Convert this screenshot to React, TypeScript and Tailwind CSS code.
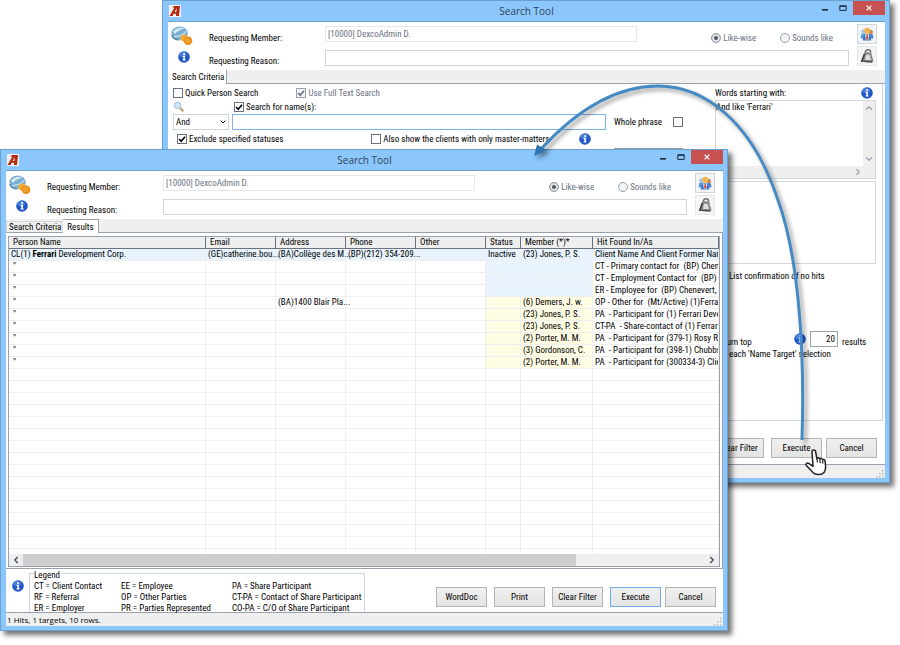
import { useId, type ReactNode } from 'react';
import { ChevronDown, ChevronLeft, ChevronRight, ChevronUp } from 'lucide-react';

const hits = [
    { address: '(BA)Collège des M...', status: 'Inactive', member: '(23) Jones, P. S.', hit: 'Client Name And Client Former Name', tone: 'blue' },
    { address: '', status: '', member: '', hit: 'CT - Primary contact for  (BP) Chenevert, D.', tone: 'blue' },
    { address: '', status: '', member: '', hit: 'CT - Employment Contact for  (BP) Chenevert, D.', tone: 'blue' },
    { address: '', status: '', member: '', hit: 'ER - Employee for  (BP) Chenevert, D.', tone: 'blue' },
    { address: '(BA)1400 Blair Pla...', status: '', member: '(6) Demers, J. w.', hit: 'OP - Other for  (Mt/Active) (1)Ferrari Development', tone: 'yellow' },
    { address: '', status: '', member: '(23) Jones, P. S.', hit: 'PA  - Participant for (1) Ferrari Development', tone: 'yellow' },
    { address: '', status: '', member: '(23) Jones, P. S.', hit: 'CT-PA  - Share-contact of (1) Ferrari Development', tone: 'yellow' },
    { address: '', status: '', member: '(2) Porter, M. M.', hit: 'PA  - Participant for (379-1) Rosy Rose', tone: 'yellow' },
    { address: '', status: '', member: '(3) Gordonson, C.', hit: 'PA  - Participant for (398-1) Chubbs Inc.', tone: 'yellow' },
    { address: '', status: '', member: '(2) Porter, M. M.', hit: 'PA  - Participant for (300334-3) Client', tone: 'yellow' },
];

const columns = ['Person Name', 'Email', 'Address', 'Phone', 'Other', 'Status', 'Member (*)*', 'Hit Found In/As'];

const legend = [
    ['CT = Client Contact', 'RF = Referral', 'ER = Employer'],
    ['EE = Employee', 'OP = Other Parties', 'PR = Parties Represented'],
    ['PA = Share Participant', 'CT-PA = Contact of Share Participant', 'CO-PA = C/O of Share Participant'],
];

function InfoIcon() {
    return (
        <svg viewBox="0 0 12 12" className="size-3 shrink-0" aria-hidden="true">
            <circle cx="6" cy="6" r="5.8" fill="#1f56c8" />
            <ellipse cx="5" cy="3.6" rx="3.8" ry="2.6" fill="#5c8fe6" opacity="0.7" />
            <circle cx="6.1" cy="2.9" r="1" fill="#fff" />
            <path d="M4.6 4.8h2.3v3.8h.8v.9H4.5v-.9h.8V5.7h-.7z" fill="#fff" />
        </svg>
    );
}

function AppIcon() {
    return (
        <svg viewBox="0 0 12 12" className="size-3" aria-hidden="true">
            <rect width="12" height="12" fill="#f3f1f1" />
            <path
                d="M.5 11 5.4 2.6 3.6 3 4.8 1H11L10 11H6.9l.2-2.2H4.7L3.6 11zM5.6 6.9h1.7l.5-3.8z"
                fill="#b5290f"
                fillRule="evenodd"
            />
        </svg>
    );
}

function GlobeCoins() {
    return (
        <svg viewBox="0 0 22 20" className="w-[22px] h-5" aria-hidden="true">
            <ellipse cx="8.6" cy="7.2" rx="8.2" ry="6.6" fill="#7aaed2" />
            <path d="M2 5.5C5 1.8 10 .8 13.5 2.4 10 3 5.8 5 4 8z" fill="#d5ebf6" />
            <path d="M3 10.5c4 .4 9-1.5 12.6-5.6" stroke="#c3e0ef" strokeWidth="1.4" fill="none" />
            <path d="M.8 9c1 3 4 5 7.6 5" stroke="#417ea9" strokeWidth="1.2" fill="none" />
            <circle cx="13" cy="12" r="3.6" fill="#f5ab35" />
            <circle cx="17" cy="14.8" r="4.3" fill="#e88d17" />
            <circle cx="16.6" cy="14.4" r="2.6" fill="#f0a132" />
        </svg>
    );
}

function PeopleIcon() {
    return (
        <svg viewBox="0 0 14 14" className="size-3.5" aria-hidden="true">
            <path d="M.6 11.5C.6 8 1.5 6 3.3 6c2.2 0 3 2 3 5.5z" fill="#5b9bdc" />
            <circle cx="3.5" cy="4.6" r="2.4" fill="#a3c6e6" />
            <path d="M8 11.5C8 8 9 6.5 10.8 6.5s2.6 1.8 2.6 5z" fill="#4f86cc" />
            <circle cx="10.8" cy="5" r="2.2" fill="#c58c58" />
            <path d="M2.8 13.4c0-4.4 1.6-6.4 4.2-6.4s4.2 2 4.2 6.4z" fill="#3b78c8" />
            <path d="M5 7.4h4.2l-.8 5.6H6z" fill="#dfeaf6" />
            <circle cx="7.2" cy="3.8" r="3" fill="#f0b54a" />
            <path d="M6.700 7.400h1l.5 4.400-1 1.200-1-1.200z" fill="#d23a2a" />
        </svg>
    );
}

function WeightIcon() {
    return (
        <svg viewBox="0 0 14 14" className="size-4" aria-hidden="true">
            <path d="M5.6 4.2C5 1.2 10 .2 10.2 3.6" fill="none" stroke="#6a6a6a" strokeWidth="1.3" />
            <path d="M5 3.8h5.6l.8 1.4-.5.8 1.8 5-.9 1.6H7.5l-5.5-.6z" fill="#8c8c8c" />
            <path d="M6 5.8h3.2l1.2 4.6H5.4z" fill="#dedede" />
            <path d="M2.2 12 4.9 5" stroke="#3a3a3a" strokeWidth="1.4" />
            <path d="M2.6 11.5 11.6 12.2" stroke="#4a4a4a" strokeWidth="1" />
        </svg>
    );
}

function Check({ label, checked, disabled }: { label: string; checked?: boolean; disabled?: boolean }) {
    const id = useId();
    return (
        <span className={`flex items-center gap-0.5 ${disabled ? 'text-gray-500' : ''}`}>
            <span className="relative flex size-2.5">
                <input
                    id={id}
                    type="checkbox"
                    defaultChecked={checked}
                    disabled={disabled}
                    className="peer size-2.5 appearance-none border border-gray-500 bg-white disabled:border-gray-400 disabled:bg-gray-100"
                />
                <svg viewBox="0 0 10 10" className="pointer-events-none absolute inset-0 hidden peer-checked:block" aria-hidden="true">
                    <path d="M2.2 5 4.2 7.2 8 2.8" fill="none" stroke="currentColor" strokeWidth="1.7" />
                </svg>
            </span>
            <label htmlFor={id}>{label}</label>
        </span>
    );
}

function Radio({ label, name, checked }: { label: string; name: string; checked?: boolean }) {
    const id = useId();
    return (
        <span className="flex items-center gap-0.5 text-gray-500">
            <input
                id={id}
                type="radio"
                name={name}
                defaultChecked={checked}
                disabled
                className="size-2.5 appearance-none rounded-full border border-gray-400 bg-gray-100 checked:bg-gray-600 checked:shadow-[inset_0_0_0_2px_#e5e5e5]"
            />
            <label htmlFor={id}>{label}</label>
        </span>
    );
}

function PushButton({ children, active }: { children: ReactNode; active?: boolean }) {
    return (
        <button
            type="button"
            className={`h-5 w-[51px] shrink-0 border bg-linear-to-b from-[#f0f0f0] to-[#e4e4e4] ${active ? 'border-[#6fadf0]' : 'border-[#b4b4b4]'}`}
        >
            {children}
        </button>
    );
}

function Header() {
    const id = useId();
    return (
        <div className="flex h-12 shrink-0 bg-white pt-0.5 pr-2">
            <div className="flex w-[41px] shrink-0 flex-col items-start gap-1 pt-0.5 pl-[3px]">
                <GlobeCoins />
                <div className="pt-px pl-[7px]">
                    <InfoIcon />
                </div>
            </div>
            <div className="flex w-[116px] shrink-0 flex-col gap-[11px] pt-2">
                <label htmlFor={`${id}-member`}>Requesting Member:</label>
                <label htmlFor={`${id}-reason`}>Requesting Reason:</label>
            </div>
            <div className="flex grow flex-col gap-2 pt-0.5">
                <div className="flex items-start justify-between">
                    <input
                        id={`${id}-member`}
                        disabled
                        defaultValue="[10000] DexcoAdmin D."
                        className="h-4 w-[312px] border border-gray-200 pb-px pl-0.5 text-gray-500"
                    />
                    <div className="flex gap-6 pt-1.5 pr-4">
                        <Radio label="Like-wise" name={`${id}-mode`} checked />
                        <Radio label="Sounds like" name={`${id}-mode`} />
                    </div>
                </div>
                <input id={`${id}-reason`} className="-mt-0.5 h-4 border border-gray-300 bg-white" />
            </div>
            <div className="flex shrink-0 flex-col gap-0.5 pl-2">
                <button type="button" aria-label="Clients" className="flex size-5 items-center justify-center border border-gray-300 bg-gray-100">
                    <PeopleIcon />
                </button>
                <button type="button" aria-label="Matters" className="flex size-5 items-center justify-center border border-gray-200 bg-gray-100">
                    <WeightIcon />
                </button>
            </div>
        </div>
    );
}

function Grip() {
    return (
        <svg viewBox="0 0 8 8" className="size-2" aria-hidden="true">
            <path d="M6 0h1.5v1.5H6zM6 3h1.5v1.5H6zM3 3h1.5v1.5H3zM6 6h1.5v1.5H6zM3 6h1.5v1.5H3zM0 6h1.5v1.5H0z" fill="#bdbdbd" />
        </svg>
    );
}

function Window({ className, status, children }: { className: string; status?: string; children: ReactNode }) {
    return (
        <section
            className={`absolute flex w-[728px] flex-col border border-[#6ba0cf] bg-[#8bc7fb] pr-1 pb-1 pl-[5px] shadow-[4px_4px_5px_rgba(0,0,0,0.55)] ${className}`}
        >
            <header className="flex h-5 shrink-0 items-start">
                <div className="flex h-5 w-[88px] items-center pl-px">
                    <AppIcon />
                </div>
                <h1 className="grow pt-0.5 text-center font-['Open_Sans','Noto_Sans',sans-serif] text-[10px] leading-4 text-slate-700">Search Tool</h1>
                <div className="flex w-[88px] justify-end text-slate-800">
                    <button type="button" aria-label="Minimize" className="flex h-3.5 w-5 items-center justify-center">
                        <svg viewBox="0 0 8 8" className="size-2">
                            <path d="M1 5h6v1.6H1z" fill="currentColor" />
                        </svg>
                    </button>
                    <button type="button" aria-label="Maximize" className="flex h-3.5 w-4 items-center justify-center">
                        <svg viewBox="0 0 8 8" className="size-2">
                            <path d="M.8 1.8h6.4v4.6H.8zM.8 2.3h6.4" fill="none" stroke="currentColor" />
                        </svg>
                    </button>
                    <button type="button" aria-label="Close" className="ml-0.5 flex h-3.5 w-8 items-center justify-center bg-[#c75050] text-white">
                        <svg viewBox="0 0 8 8" className="size-2">
                            <path d="m1.6 1.6 4.8 4.8m0-4.8L1.6 6.4" stroke="currentColor" strokeWidth="1.3" />
                        </svg>
                    </button>
                </div>
            </header>
            <div className="flex min-h-0 grow flex-col border-t border-[#6ba0cf] bg-white">
                <Header />
                {children}
                <footer className="flex h-3.5 shrink-0 items-end justify-between border-t border-gray-400 bg-[#efefef] pr-px pl-px font-['Open_Sans','Noto_Sans',sans-serif] text-[8px] leading-[13px]">
                    <span>{status}</span>
                    <Grip />
                </footer>
            </div>
        </section>
    );
}

function CriteriaWindow() {
    return (
        <Window className="top-0 left-[162px] h-[483px]">
            <nav className="flex h-3.5 shrink-0 bg-[#efefef]">
                <button type="button" className="h-3.5 border-r border-gray-400 bg-white pr-0.5 pl-1">Search Criteria</button>
                <div className="grow border-b border-gray-400" />
            </nav>
            <div className="mr-0.5 flex grow border-r border-b border-gray-300 pt-0.5 pr-1.5">
                <div className="flex grow flex-col pl-[5px]">
                    <div className="flex h-3.5 items-center gap-[38px]">
                        <Check label="Quick Person Search" />
                        <Check label="Use Full Text Search" checked disabled />
                    </div>
                    <div className="flex h-3.5 items-center gap-[49px]">
                        <svg viewBox="0 0 12 12" className="size-3" aria-hidden="true">
                            <path d="m7 7 3.4 3.2" stroke="#cf9460" strokeWidth="2" />
                            <circle cx="4.6" cy="4.4" r="3.3" fill="#cfe6f8" stroke="#9cc1de" />
                        </svg>
                        <Check label="Search for name(s):" checked />
                    </div>
                    <div className="flex h-4 items-center">
                        <div className="relative flex">
                            <select aria-label="Operator" className="h-4 w-14 appearance-none border border-gray-300 bg-white pl-0.5 leading-3">
                                <option>And</option>
                            </select>
                            <ChevronDown className="pointer-events-none absolute top-1 right-0.5 size-2" strokeWidth={3} />
                        </div>
                        <input aria-label="Name" className="ml-[3px] h-4 w-[374px] border border-[#7fb2e5] bg-white" />
                        <label htmlFor="whole" className="w-[67px] pl-2">Whole phrase</label>
                        <input id="whole" type="checkbox" className="size-2.5 appearance-none border border-gray-500 bg-white" />
                    </div>
                    <div className="flex h-[18px] items-center gap-[88px] pl-1">
                        <Check label="Exclude specified statuses" checked />
                        <span className="flex items-center gap-[30px]">
                            <Check label="Also show the clients with only master-matters" />
                            <InfoIcon />
                        </span>
                    </div>
                    <div className="flex justify-end pr-8">
                        <button type="button" aria-label="Edit statuses" className="h-5 w-[69px] border border-gray-400 bg-[#ebebeb]" />
                    </div>
                </div>
                <div className="flex w-[161px] shrink-0 flex-col">
                    <div className="flex h-3.5 items-center justify-between pr-[3px]">
                        <label htmlFor="words">Words starting with:</label>
                        <InfoIcon />
                    </div>
                    <div className="flex h-[79px] flex-col border border-gray-300">
                        <div className="flex grow">
                            <textarea id="words" defaultValue="And like 'Ferrari'" className="min-w-0 grow resize-none leading-3" />
                            <div className="flex w-3 shrink-0 flex-col items-center justify-between bg-[#efefef] py-0.5">
                                <ChevronUp className="size-2.5 text-gray-400" strokeWidth={3} />
                                <ChevronDown className="size-2.5 text-gray-400" strokeWidth={3} />
                            </div>
                        </div>
                        <div className="flex h-3 items-center justify-end bg-[#efefef] pr-3">
                            <ChevronRight className="size-2.5 text-gray-400" strokeWidth={3} />
                        </div>
                    </div>
                    <div className="mt-0.5 h-[83px] border border-gray-300" />
                    <p className="mt-1.5 pl-3.5">List confirmation of no hits</p>
                    <div className="mt-11 flex items-center pt-1">
                        <label htmlFor="top" className="w-[79px] pt-1.5">Return top</label>
                        <InfoIcon />
                        <input id="top" defaultValue="20" className="mr-1 ml-1 h-4 w-7 border border-gray-400 pr-0.5 text-right" />
                        <span className="pt-1.5">results</span>
                    </div>
                    <p className="pl-3.5">each 'Name Target' selection</p>
                </div>
            </div>
            <div className="flex h-[43px] shrink-0 items-center justify-end gap-[7px] pt-2.5 pr-2">
                <PushButton>Clear Filter</PushButton>
                <div className="flex gap-1">
                    <PushButton>Execute</PushButton>
                    <PushButton>Cancel</PushButton>
                </div>
            </div>
        </Window>
    );
}

function ResultsTable() {
    const cell = 'border-r border-b border-[#efefef] pl-0.5 whitespace-pre';
    return (
        <table className="w-full table-fixed border-separate border-spacing-0 leading-[11px]">
            <colgroup>
                <col className="w-[197px]" />
                <col className="w-[70px]" />
                <col className="w-[70px]" />
                <col className="w-[70px]" />
                <col className="w-[70px]" />
                <col className="w-[35px]" />
                <col className="w-[72px]" />
                <col />
            </colgroup>
            <thead>
                <tr className="h-3 bg-[#efefef]">
                    {columns.map((name) => (
                        <th key={name} className="border-r border-b border-gray-500 pl-1 text-left font-normal whitespace-nowrap">
                            {name}
                        </th>
                    ))}
                </tr>
            </thead>
            <tbody>
                {hits.map((row, i) => {
                    const line = i === 0 ? 'bg-[#e9f3fd]' : '';
                    const tone = row.tone === 'blue' ? 'bg-[#e9f3fd]' : 'bg-[#fefde3]';
                    return (
                        <tr key={i} className={`h-3 ${line}`}>
                            <td className={cell}>{i === 0 ? <>CL(1) <b>Ferrari</b> Development Corp.</> : ' "'}</td>
                            <td className={cell}>{i === 0 ? '(GE)catherine.bou...' : ''}</td>
                            <td className={cell}>{row.address}</td>
                            <td className={cell}>{i === 0 ? '(BP)(212) 354-209...' : ''}</td>
                            <td className={cell} />
                            <td className={`${cell} ${tone}`}>{row.status}</td>
                            <td className={`${cell} ${tone}`}>{row.member}</td>
                            <td className={`${cell} overflow-hidden`}>{row.hit}</td>
                        </tr>
                    );
                })}
                {Array.from({ length: 16 }, (_, i) => (
                    <tr key={i} className="h-3">
                        {columns.map((name) => (
                            <td key={name} className={cell} />
                        ))}
                    </tr>
                ))}
            </tbody>
        </table>
    );
}

function ResultsWindow() {
    return (
        <Window className="top-[149px] left-0 h-[482px]" status="1 Hits, 1 targets, 10 rows.">
            <nav className="flex h-3.5 shrink-0 items-end bg-[#efefef]">
                <button type="button" className="h-3 border border-b-gray-400 border-gray-300 pr-px pl-0.5 leading-[10px]">Search Criteria</button>
                <button type="button" className="h-3.5 border-t border-r border-gray-400 bg-white px-1 leading-3">Results</button>
                <div className="h-3.5 grow border-b border-gray-400" />
            </nav>
            <div className="flex min-h-0 grow flex-col border-r border-b border-gray-400 pt-[3px]">
                <div className="mx-0.5 mb-px flex min-h-0 grow flex-col border border-gray-400">
                    <div className="min-h-0 grow overflow-hidden">
                        <ResultsTable />
                    </div>
                    <div className="flex h-3 shrink-0 items-center bg-[#efefef]">
                        <ChevronLeft className="mx-0.5 size-2.5 text-gray-600" strokeWidth={4} />
                        <div className="h-3 w-[553px] bg-[#cdcdcd]" />
                        <ChevronRight className="mr-0.5 ml-auto size-2.5 text-gray-600" strokeWidth={4} />
                    </div>
                </div>
            </div>
            <div className="flex h-[43px] shrink-0 items-start pr-[7px]">
                <div className="pt-[11px] pr-[5px] pl-1.5">
                    <InfoIcon />
                </div>
                <fieldset className="relative mt-1 h-[39px] w-[336px] border border-b-0 border-gray-300 pl-1">
                    <legend className="absolute -top-1 left-1 bg-white pr-0.5 leading-[10px]">Legend</legend>
                    <div className="grid grid-cols-[87px_111px_1fr] pt-[7px]">
                        {legend.map((items) => (
                            <ul key={items[0]} className="leading-[11px] whitespace-nowrap">
                                {items.map((item) => (
                                    <li key={item}>{item}</li>
                                ))}
                            </ul>
                        ))}
                    </div>
                </fieldset>
                <div className="flex grow justify-end gap-[7px] pt-[18px]">
                    <PushButton>WordDoc</PushButton>
                    <PushButton>Print</PushButton>
                    <PushButton>Clear Filter</PushButton>
                    <div className="flex gap-1">
                        <PushButton active>Execute</PushButton>
                        <PushButton>Cancel</PushButton>
                    </div>
                </div>
            </div>
        </Window>
    );
}

function Annotation() {
    return (
        <svg viewBox="0 0 900 645" className="pointer-events-none absolute top-0 left-0 h-[645px] w-[900px] drop-shadow-[3px_3px_2px_rgba(0,0,0,0.4)]" aria-hidden="true">
            <path d="M802 440C805 345 798 255 778 200C752 122 705 86 658 86C615 86 575 112 541 149" fill="none" stroke="#458ac4" strokeWidth="3" />
            <path d="M534 156 537 144.5 541 147 547 150z" fill="#2f74b0" />
        </svg>
    );
}

function HandCursor() {
    return (
        <svg viewBox="0 0 22 27" className="absolute top-[449px] left-[805px] h-[27px] w-[22px]" aria-hidden="true">
            <path
                d="M7 2.5c0-2 3.2-2 3.6 0l1.2 7c.8-1 2.6-.8 3 .5.9-.9 2.5-.5 2.8.8 1-.6 2.4 0 2.5 1.3l.5 5.4c.1 4-1.8 7.6-6 8-3.6.4-6.2-.8-8-3.6L1.4 16.5c-1-1.7.8-3.3 2.400-2.200l4.200 3z"
                fill="#fff"
                stroke="#222"
                strokeWidth="1.5"
                strokeLinejoin="round"
            />
            <path d="m11.8 9.5.7 4M14.8 10.5l.5 3.5M17.6 11.5l.3 3" stroke="#222" strokeWidth="1.2" />
        </svg>
    );
}

export default function App() {
    return (
        <main className="relative min-h-screen overflow-hidden bg-white font-['Roboto_Condensed','Roboto',sans-serif] text-[9px] leading-3 text-black">
            <CriteriaWindow />
            <ResultsWindow />
            <Annotation />
            <HandCursor />
        </main>
    );
}
